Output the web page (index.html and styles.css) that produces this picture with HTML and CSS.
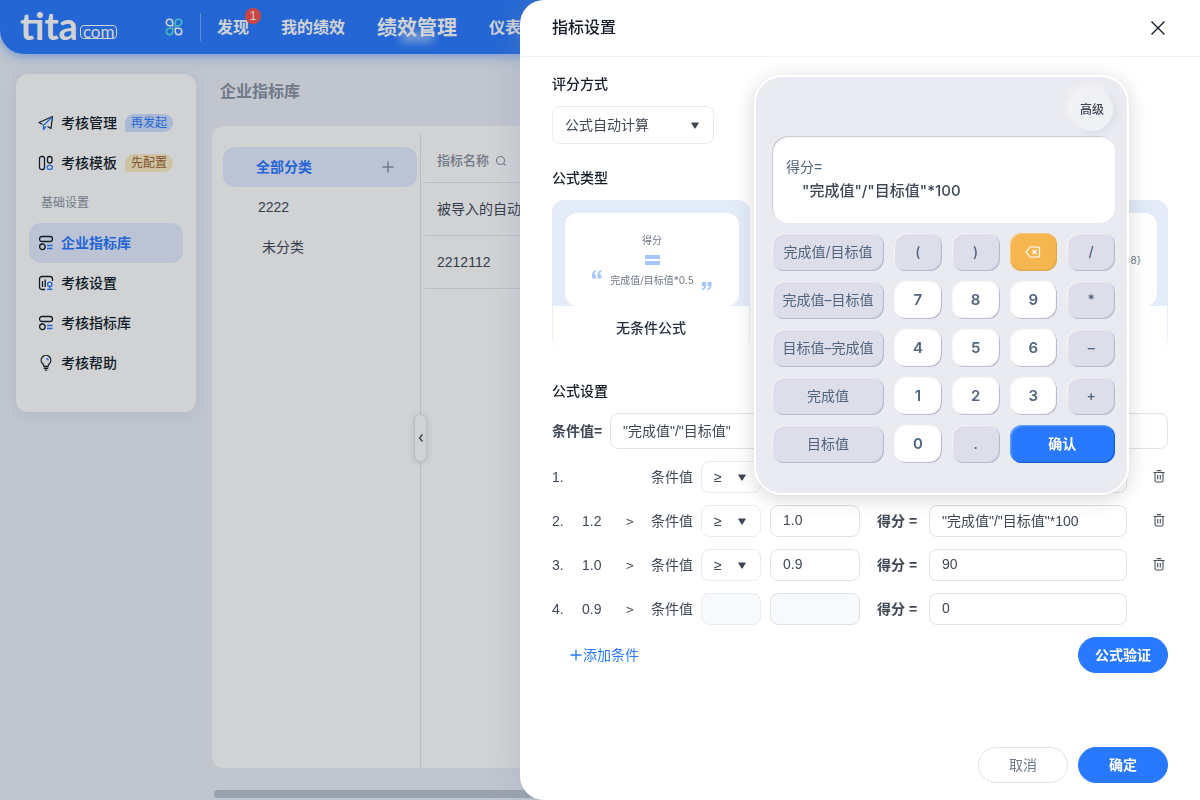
FILE: index.html
```html
<!DOCTYPE html>
<html lang="zh-CN">
<head>
<meta charset="utf-8">
<meta name="viewport" content="width=device-width, initial-scale=1">
<title>指标设置</title>
<link rel="stylesheet" href="styles.css">
</head>
<body>
<svg class="sprite" aria-hidden="true">
  <symbol id="caret" viewBox="0 0 8 7"><path d="M.8.5h6.4q.8 0 .4.8L4.6 6.2q-.6.8-1.2 0L.4 1.3Q0 .5.8.5z" fill="#3f4755"/></symbol>
  <symbol id="trash" viewBox="0 0 12 14"><path d="M.5 2.500h11M3.800.6h4.400M2 2.500v8Q2 12 3.600 12h4.800q1.600 0 1.600-1.500v-8M4.700 5v4.500M7.300 5v4.500" fill="none" stroke="#4a515e" stroke-width="1.100"/></symbol>
  <symbol id="library" viewBox="0 0 16 16"><rect x="1.500" y="1.500" width="13" height="5" rx="2.500" fill="none" stroke="#141c28" stroke-width="1.300"/><circle cx="4.400" cy="11.800" r="2.800" fill="none" stroke="#141c28" stroke-width="1.300"/><path d="M9 10.500h5.500M9 13.500h5.500" stroke="#2879ff" stroke-width="1.300"/></symbol>
</svg>

<div class="app">
  <header class="topbar">
    <a class="logo" href="#"><span class="logo-name">tita</span><span class="logo-tag">com</span></a>
    <button class="apps" aria-label="应用">
      <svg width="18" height="18" viewBox="0 0 18 18" fill="none" stroke-width="1.600"><path d="M7.700 7.700H4.500A3.200 3.200 0 1 1 7.700 4.500z" stroke="#fff"/><path d="M10.300 7.700h3.200A3.200 3.200 0 1 0 10.300 4.500z" stroke="#4fe3e8"/><path d="M7.700 10.300H4.500A3.200 3.200 0 1 0 7.700 13.500z" stroke="#4fe3e8"/><path d="M10.300 10.300h3.200A3.200 3.200 0 1 1 10.300 13.500z" stroke="#fff"/></svg>
    </button>
    <nav class="nav">
      <a href="#">发现<span class="badge">1</span></a>
      <a href="#">我的绩效</a>
      <a href="#" class="current">绩效管理</a>
      <a href="#">仪表盘</a>
    </nav>
  </header>

  <div class="body">
    <nav class="side">
      <a href="#"><svg width="16" height="16" viewBox="0 0 16 16" fill="none" stroke="#141c28" stroke-width="1.200" stroke-linejoin="round"><path d="M4.500 9.500L1 7.500 14.500 1.500 13 13.500 9.500 11.500"/><path d="M14 2L5.500 10.500v4l2.500-3" stroke="#2879ff" stroke-width="1.400"/></svg>考核管理<span class="tag blue">再发起</span></a>
      <a href="#"><svg width="16" height="16" viewBox="0 0 16 16" fill="none" stroke="#141c28" stroke-width="1.300"><rect x="1.500" y="1.500" width="5" height="13" rx="2"/><rect x="9.500" y="1.500" width="4.500" height="6.500" rx="2.200"/><rect x="9.200" y="10.300" width="5.200" height="4" rx="2" stroke="#2879ff"/></svg>考核模板<span class="tag gold">先配置</span></a>
      <span class="group">基础设置</span>
      <a href="#" class="active"><svg width="16" height="16"><use href="#library"/></svg>企业指标库</a>
      <a href="#"><svg width="16" height="16" viewBox="0 0 16 16" fill="none" stroke="#141c28" stroke-width="1.300"><path d="M7 14.500H4Q1.500 14.500 1.500 12V4Q1.500 1.500 4 1.500h8Q14.500 1.500 14.500 4v2M4.500 6v6M7.200 4.500V12"/><g stroke="#2879ff"><circle cx="11.800" cy="9.300" r="2.200"/><path d="M11.800 11.500v2.500M9 14.300h5.600"/></g></svg>考核设置</a>
      <a href="#"><svg width="16" height="16"><use href="#library"/></svg>考核指标库</a>
      <a href="#"><svg width="16" height="16" viewBox="0 0 16 16" fill="none" stroke="#141c28" stroke-width="1.300"><path d="M6 11.500Q6 10 4.500 8.500a4.800 4.800 0 1 1 7 0Q10 10 10 11.500zM5.800 13.300h4.400M6.800 15.200h2.400"/><path d="M8.500 3.500Q10 3.800 10.200 5.300" stroke="#2879ff"/></svg>考核帮助</a>
    </nav>

    <main class="main">
      <h1>企业指标库</h1>
      <div class="panel">
        <div class="cats">
          <div class="cat active"><span>全部分类</span><button aria-label="新增分类"><svg width="12" height="12" viewBox="0 0 12 12"><path d="M6 .5v11M.5 6h11" stroke="#89919f" stroke-width="1.400"/></svg></button></div>
          <div class="cat">2222</div>
          <div class="cat none">未分类</div>
          <button class="fold" aria-label="收起"><svg width="6" height="10" viewBox="0 0 6 10"><path d="M4.500 1.500L1.500 5l3 3.500" fill="none" stroke="#3f4755" stroke-width="1.300"/></svg></button>
        </div>
        <div class="list">
          <table>
            <thead><tr><th>指标名称<svg width="12" height="12" viewBox="0 0 12 12" fill="none" stroke="#89919f" stroke-width="1.100"><circle cx="5.500" cy="5.500" r="4"/><path d="M8.500 8.500l2 1.800"/></svg></th></tr></thead>
            <tbody><tr><td>被导入的自动</td></tr><tr><td>2212112</td></tr></tbody>
          </table>
        </div>
      </div>
      <div class="hscroll"></div>
    </main>
  </div>
</div>

<div class="mask"></div>

<section class="drawer" role="dialog" aria-labelledby="dlg-title">
  <header class="drawer-head">
    <h2 id="dlg-title">指标设置</h2>
    <button aria-label="关闭"><svg width="16" height="16" viewBox="0 0 16 16"><path d="M1.500 1.500l13 13M14.500 1.500l-13 13" stroke="#141c28" stroke-width="1.400"/></svg></button>
  </header>

  <div class="content">
    <label class="title" for="mode">评分方式</label>
    <div class="picker mode">
      <select id="mode"><option>公式自动计算</option></select>
      <svg width="8" height="7"><use href="#caret"/></svg>
    </div>

    <h3 class="title">公式类型</h3>
    <div class="types">
      <button class="type">
        <span class="art"><span class="paper">
          <span>得分</span>
          <span class="equals"></span>
          <span class="quote"><svg class="open" width="10" height="9" viewBox="0 0 10 9" fill="#a6c6ff"><path d="M4 0Q0 1 0 5v3.500h4V4.500H2Q2 2.500 4 1.800zM9.500 0Q5.500 1 5.500 5v3.500h4V4.500h-2Q7.500 2.500 9.500 1.800z"/></svg>完成值/目标值*0.5<svg class="close" width="10" height="9" viewBox="0 0 10 9" fill="#a6c6ff"><path d="M0 8.500q4-1 4-5V0H0v4h2Q2 6 0 6.700zM5.500 8.500q4-1 4-5V0h-4v4h2q0 2-2 2.700z"/></svg></span>
        </span></span>
        <span class="type-name">无条件公式</span>
      </button>
      <button class="type" aria-label="公式类型"><span class="art"><span class="paper"></span></span><span class="type-name"></span></button>
      <button class="type"><span class="art"><span class="paper end"><span>=8}</span></span></span><span class="type-name"></span></button>
    </div>

    <h3 class="title">公式设置</h3>
    <div class="cond">
      <label for="cond">条件值=</label>
      <input id="cond" type="text" value="&quot;完成值&quot;/&quot;目标值&quot;">
    </div>

    <div class="rules">
      <div class="rule">
        <span>1.</span><span></span><span></span><label for="op1">条件值</label>
        <div class="picker op"><select id="op1"><option>≥</option></select><svg width="8" height="7"><use href="#caret"/></svg></div>
        <input type="text" aria-label="条件值 1"><label class="score" for="s1">得分 =</label><input id="s1" type="text">
        <button class="del" aria-label="删除"><svg width="12" height="14"><use href="#trash"/></svg></button>
      </div>
      <div class="rule">
        <span>2.</span><span>1.2</span><span class="gt">&gt;</span><label for="op2">条件值</label>
        <div class="picker op"><select id="op2"><option>≥</option></select><svg width="8" height="7"><use href="#caret"/></svg></div>
        <input type="text" aria-label="条件值 2" value="1.0"><label class="score" for="s2">得分 =</label><input id="s2" type="text" value="&quot;完成值&quot;/&quot;目标值&quot;*100">
        <button class="del" aria-label="删除"><svg width="12" height="14"><use href="#trash"/></svg></button>
      </div>
      <div class="rule">
        <span>3.</span><span>1.0</span><span class="gt">&gt;</span><label for="op3">条件值</label>
        <div class="picker op"><select id="op3"><option>≥</option></select><svg width="8" height="7"><use href="#caret"/></svg></div>
        <input type="text" aria-label="条件值 3" value="0.9"><label class="score" for="s3">得分 =</label><input id="s3" type="text" value="90">
        <button class="del" aria-label="删除"><svg width="12" height="14"><use href="#trash"/></svg></button>
      </div>
      <div class="rule">
        <span>4.</span><span>0.9</span><span class="gt">&gt;</span><label for="op4">条件值</label>
        <div class="picker op"><select id="op4" disabled></select></div>
        <input type="text" aria-label="条件值 4" disabled><label class="score" for="s4">得分 =</label><input id="s4" type="text" value="0">
      </div>
    </div>

    <div class="actions">
      <button class="add"><svg width="12" height="12" viewBox="0 0 12 12"><path d="M6 .5v11M.5 6h11" stroke="#2879ff" stroke-width="1.300"/></svg>添加条件</button>
      <button class="btn primary">公式验证</button>
    </div>
  </div>

  <footer class="foot">
    <button class="btn">取消</button>
    <button class="btn primary">确定</button>
  </footer>

  <div class="calc">
    <button class="adv">高级</button>
    <div class="screen"><span>得分=</span><output>"完成值"/"目标值"*100</output></div>
    <div class="keys">
      <button>完成值/目标值</button><button>(</button><button>)</button><button class="back" aria-label="退格"><svg width="16" height="12" viewBox="0 0 16 12" fill="none" stroke="#fff" stroke-width="1.200"><path d="M5 1h8.500q1 0 1 1v8q0 1-1 1H5L1 6z"/><path d="M7.500 4l4 4M11.500 4l-4 4" stroke-width="1.500"/></svg></button><button>/</button>
      <button>完成值–目标值</button><button class="num">7</button><button class="num">8</button><button class="num">9</button><button>*</button>
      <button>目标值–完成值</button><button class="num">4</button><button class="num">5</button><button class="num">6</button><button>–</button>
      <button>完成值</button><button class="num">1</button><button class="num">2</button><button class="num">3</button><button>+</button>
      <button>目标值</button><button class="num">0</button><button>.</button><button class="ok">确认</button>
    </div>
  </div>
</section>
</body>
</html>
```
FILE: styles.css
```css
* { box-sizing: border-box; }
body {
  margin: 0;
  height: 100vh;
  overflow: hidden;
  background: #ebeff8;
  color: #3f4755;
  font: 14px/20px "Liberation Sans", "Noto Sans CJK SC", sans-serif;
}
button, input, select { font: inherit; color: inherit; margin: 0; }
button { background: none; border: 0; padding: 0; cursor: pointer; }
a { color: inherit; text-decoration: none; }
h1, h2, h3 { margin: 0; }
svg { flex: none; display: block; }
.sprite { position: absolute; width: 0; height: 0; }

.app { isolation: isolate; height: 100%; display: flex; flex-direction: column; }
.topbar {
  display: flex;
  align-items: center;
  height: 54px;
  flex: none;
  padding-left: 20px;
  background: #2879ff;
  border-bottom-left-radius: 24px;
  box-shadow: 0 2px 12px rgba(40, 121, 255, .5);
  color: #fff;
}
.logo { display: flex; align-items: flex-end; width: 145px; height: 54px; padding-bottom: 15px; }
.logo-name { font: 700 38px/27px Lato, sans-serif; }
.logo-tag {
  border: 1px solid #fff;
  border-radius: 4px;
  padding: 0 2px 1px;
  margin-left: 2px;
  font: 400 17px/11px Lato, sans-serif;
}
.apps { display: flex; align-items: center; height: 28px; padding-right: 17px; border-right: 1px solid rgba(255, 255, 255, .35); }
.nav { display: flex; align-items: center; gap: 32px; margin-left: 16px; padding-top: 1px; font-size: 16px; font-weight: 700; white-space: nowrap; }
.nav a { position: relative; }
.nav .current { font-size: 20px; }
.nav .current::after {
  content: "";
  position: absolute;
  left: 24px;
  bottom: -4px;
  width: 32px;
  height: 10px;
  background: rgba(255, 255, 255, .5);
  filter: blur(4px);
}
.badge {
  position: absolute;
  right: -12px;
  top: -10px;
  width: 16px;
  height: 16px;
  border-radius: 8px;
  background: #f9504a;
  font: 12px/16px "Liberation Sans", sans-serif;
  text-align: center;
}

.body { flex: 1; min-height: 0; display: flex; gap: 16px; padding: 20px 0 2px 16px; }
.side {
  width: 180px;
  align-self: flex-start;
  flex: none;
  padding: 29px 13px;
  background: #fff;
  border-radius: 12px;
  box-shadow: 0 2px 14px rgba(127, 145, 180, .15);
  color: #141c28;
  font-weight: 500;
}
.side a { display: flex; align-items: center; height: 40px; padding-left: 9px; border-radius: 12px; }
.side a svg { margin-right: 7px; }
.side .active { background: #e6edff; color: #2879ff; font-weight: 700; }
.group { display: block; padding-left: 12px; font-size: 12px; line-height: 40px; font-weight: 400; color: #89919f; }
.tag { margin-left: 8px; padding: 0 6px; border-radius: 9px 9px 9px 2px; font-size: 12px; line-height: 18px; font-weight: 400; }
.blue { background: #cfdfff; color: #2879ff; }
.gold { background: #fcedc5; color: #a0622d; }

.main { flex: 1; min-width: 0; display: flex; flex-direction: column; }
h1 { padding: 8px 8px 24px; font-size: 16px; line-height: 20px; color: #89919f; }
.panel { flex: 1; min-height: 0; display: flex; background: #fff; border-radius: 12px; }
.cats { position: relative; width: 209px; padding: 21px 4px 0 11px; }
.cats::after { content: ""; position: absolute; right: 0; top: 8px; bottom: 0; width: 1px; background: #e3e6eb; }
.cat { display: flex; align-items: center; height: 40px; padding: 0 23px 0 35px; }
.cat.none { padding-left: 39px; }
.cat.active { justify-content: space-between; padding-left: 33px; background: #e6edff; border-radius: 12px; color: #2879ff; font-weight: 700; }
.fold {
  position: absolute;
  right: -6px;
  top: 288px;
  z-index: 1;
  display: grid;
  place-items: center;
  width: 13px;
  height: 48px;
  background: #fff;
  border: 1px solid #e3e6eb;
  border-radius: 7px;
  box-shadow: 0 1px 6px rgba(0, 0, 0, .12);
}
.list { flex: 1; padding: 15px 0 0 4px; }
table { width: 100%; border-collapse: collapse; }
th, td { padding: 0 12px; text-align: left; border-bottom: 1px solid #e3e6eb; white-space: nowrap; }
th { height: 41px; font-size: 13px; font-weight: 500; color: #89919f; }
th svg { display: inline-block; margin-left: 6px; vertical-align: -2px; }
td { height: 53px; }
.hscroll { height: 8px; margin: 22px 0 0 2px; border-radius: 4px; background: #bbc4d1; }

.mask { position: fixed; inset: 0; background: rgba(20, 28, 40, .2); }

.drawer {
  position: fixed;
  inset: 0 0 0 auto;
  width: 680px;
  max-width: 100%;
  display: flex;
  flex-direction: column;
  background: #fff;
  border-radius: 24px 0 0 24px;
  box-shadow: 0 0 30px rgba(127, 145, 180, .3);
}
.drawer-head { display: flex; align-items: center; justify-content: space-between; height: 57px; flex: none; padding: 0 34px 0 32px; border-bottom: 1px solid #f0f2f5; }
h2 { font-size: 16px; font-weight: 500; color: #141c28; }
.content { flex: 1; display: flex; flex-direction: column; padding: 17px 32px 0; }
.title { font-size: 14px; line-height: 20px; font-weight: 500; color: #141c28; }
.picker { display: grid; align-items: center; }
.picker > * { grid-area: 1 / 1; }
.picker svg { justify-self: end; margin-right: 15px; pointer-events: none; }
select, input {
  appearance: none;
  width: 100%;
  min-width: 0;
  height: 32px;
  padding: 0 12px;
  background: #fff;
  border: 1px solid #dfe3ea;
  border-radius: 8px;
  opacity: 1;
}
input { padding-bottom: 2px; }
select { border-color: #e9ecf0; }
input:disabled, select:disabled { background: #f7f9fb; }
.mode { width: 162px; margin: 12px 0 24px; }
.mode select { height: 38px; }
.gt { font-family: "Noto Sans CJK SC", sans-serif; }

.types { display: grid; grid-template-columns: repeat(3, 1fr); gap: 11px; margin: 12px 0 31px; }
.type { display: flex; flex-direction: column; height: 150px; border-radius: 12px; overflow: hidden; background: #fff; }
.art { width: 100%; height: 106px; padding: 13px 11px 0 13px; background: #e3ebf9; }
.paper { display: flex; flex-direction: column; align-items: center; height: 93px; padding-top: 20px; border-radius: 12px; background: #fff; font: 10px/14px Inter, "Noto Sans CJK SC", sans-serif; color: #6f7886; }
.paper.end { align-items: flex-end; padding: 40px 16px 0 0; }
.equals { width: 15px; height: 10px; margin: 8px 0; border: solid #a6c6ff; border-width: 4px 0; }
.quote { display: flex; gap: 8px; }
.quote .close { align-self: flex-end; transform: translateY(4px); }
.open { transform: translateY(-3px); }
.type-name { flex: 1; width: 100%; padding-top: 12px; border: 1px solid #e9f0fb; border-width: 0 1px; border-radius: 0 0 12px 12px; font-weight: 500; color: #262f3e; }

.cond { display: grid; grid-template-columns: 50px 1fr; gap: 8px; align-items: center; margin: 12px 0; font-weight: 700; white-space: nowrap; }
.cond input { height: 36px; font-weight: 400; }
.rules { display: grid; gap: 12px; }
.rule { display: grid; grid-template-columns: 30px 44px 25px 50px 60px 9px 90px 17px 52px 1fr 41px; align-items: center; }
.rule > :nth-child(6) { grid-column: 7; }
.rule > :nth-child(7) { grid-column: 9; }
.score { font-weight: 700; }
.del { justify-self: end; padding-right: 3px; }
.actions { display: flex; justify-content: space-between; align-items: center; margin-top: 12px; padding-left: 18px; }
.add { display: flex; align-items: center; gap: 1px; color: #2879ff; }
.btn { min-width: 90px; height: 36px; border: 1px solid #dfe3ea; border-radius: 18px; color: #6f7886; }
.primary { background: #2879ff; border-color: #2879ff; color: #fff; font-weight: 700; }
.foot { display: flex; justify-content: flex-end; gap: 10px; padding: 0 32px 17px; }

.calc {
  position: absolute;
  top: 75px;
  right: 71px;
  width: 375px;
  padding: 12px 12px 30px 16px;
  display: flex;
  flex-direction: column;
  border: 2px solid #fff;
  border-radius: 28px;
  background: #eaebf1;
  box-shadow: 0 4px 20px rgba(0, 0, 0, .16);
  color: #51647d;
}
.adv { align-self: flex-end; width: 42px; height: 42px; margin: 0 2px 5px; border-radius: 21px; background: #eff1f5; box-shadow: -3px -3px 6px #f5f6fa, 3px 3px 6px #dcdde7; font-size: 12px; font-weight: 500; color: #3f4755; }
.screen { height: 87px; margin-bottom: 10px; padding: 19px 14px; background: #fff; border-radius: 16px; box-shadow: inset 1px 1px 1px #c6c6cc; line-height: 24px; }
.screen output { display: block; padding-left: 16px; font-size: 15px; font-weight: 500; font-family: Inter, "Noto Sans CJK SC", sans-serif; color: #3f4755; }
.keys { display: grid; grid-template-columns: 112px repeat(4, 1fr); gap: 10px; }
.keys button { height: 38px; border-radius: 12px; background: #dedeea; box-shadow: inset -1px -1px 1px #b4b4cd, inset 1px 1px 1px #f4f4fa; font: 500 14px/20px Inter, "Noto Sans CJK SC", sans-serif; }
.keys button:nth-child(5n + 1) { font-weight: 400; }
.keys .num { background: #fff; font-size: 15px; font-weight: 600; }
.keys .back { display: grid; place-items: center; background: #f5b64f; box-shadow: inset -1px -1px 1px #dba74e, inset 1px 1px 1px #f8cb83; }
.keys .ok { grid-column: span 2; background: #2879ff; box-shadow: inset -1px -1px 1px #1158cf, inset 1px 1px 2px #7aacff; color: #fff; font-weight: 700; }
```
